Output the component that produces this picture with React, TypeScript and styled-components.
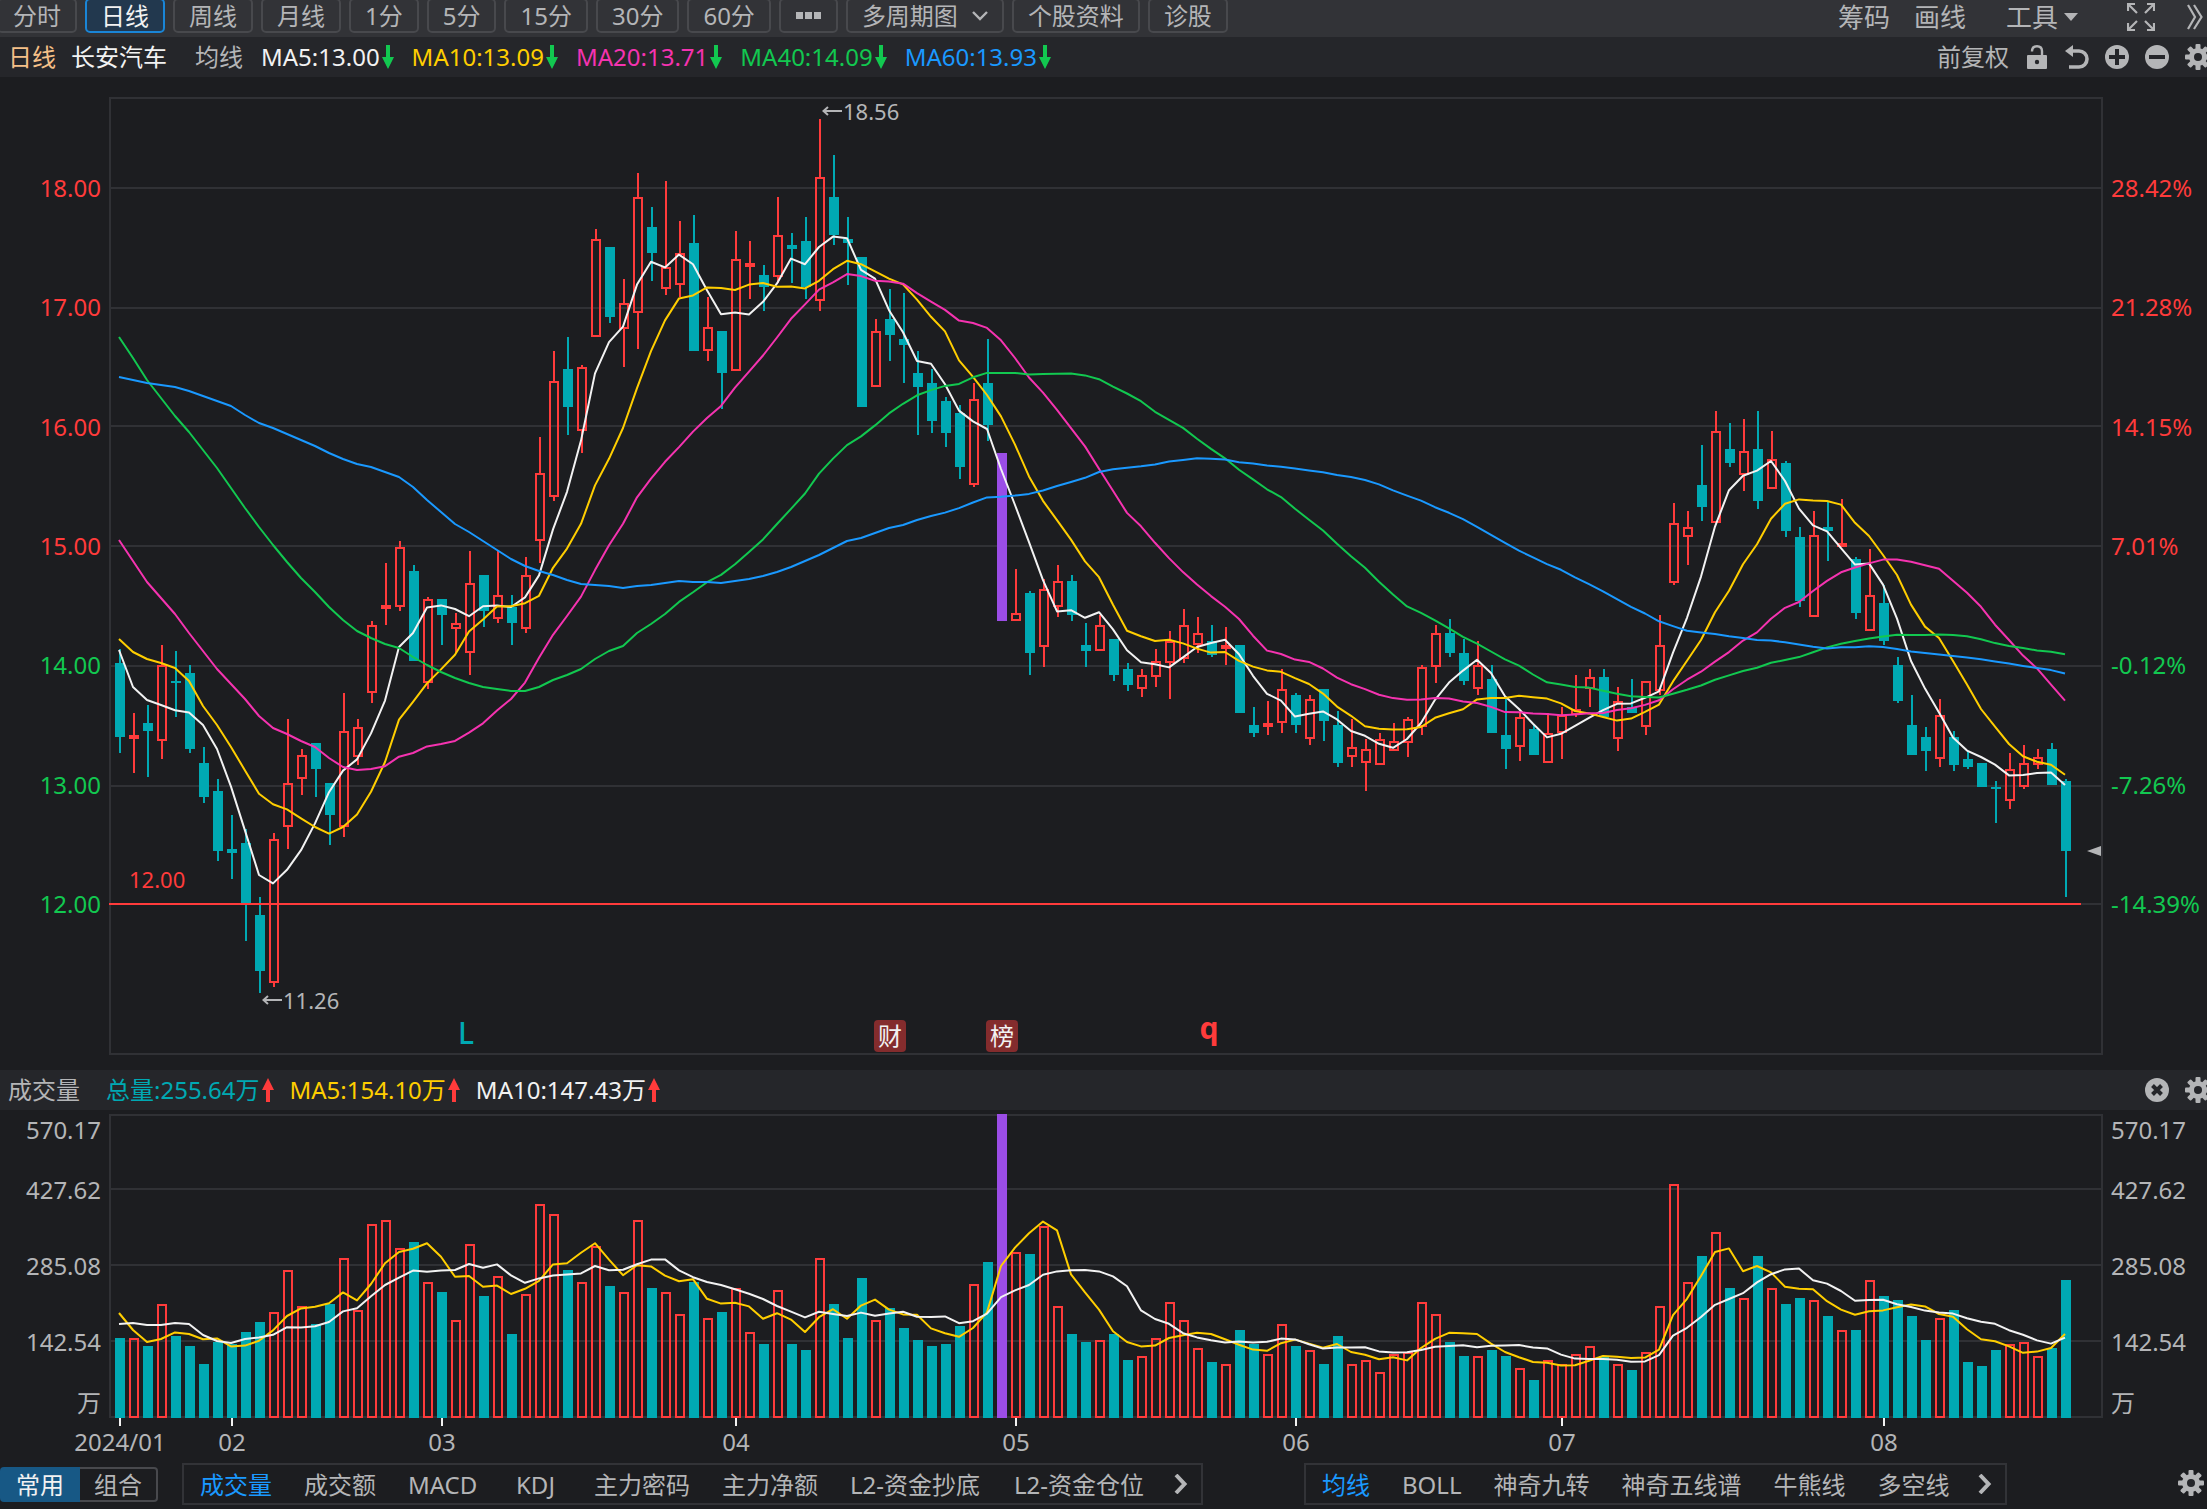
import React from "react";
import styled, { createGlobalStyle } from "styled-components";

const color = {
  page: "#1c1d20",
  bar: "#323337",
  subBar: "#25262a",
  line: "#303135",
  edge: "#48494d",
  text: "#b4b5b7",
  white: "#f2f2f2",
  red: "#ff3b3b",
  teal: "#00a9b3",
  green: "#12c850",
  yellow: "#ffce00",
  pink: "#f533b0",
  blue: "#1a99ff",
  purple: "#9b4de6",
  orange: "#f5c088",
};

/* ------------------------------------------------------------------ data */

type Kind = "u" | "d" | "p";
/** kind, high, body top, body bottom, low, volume top (all in plot units, downwards) */
type Bar = [Kind, number, number, number, number, number];

const bars: Bar[] = [
  ["d", 649, 663, 737, 753, 1338],
  ["u", 713, 735, 739, 773, 1338],
  ["d", 705, 723, 731, 777, 1346],
  ["u", 645, 665, 741, 759, 1304],
  ["d", 651, 681, 683, 717, 1336],
  ["d", 665, 673, 749, 753, 1346],
  ["d", 747, 763, 797, 803, 1364],
  ["d", 779, 791, 851, 861, 1342],
  ["d", 815, 849, 853, 879, 1344],
  ["d", 829, 843, 903, 941, 1332],
  ["d", 897, 915, 971, 993, 1322],
  ["u", 833, 839, 983, 987, 1312],
  ["u", 719, 783, 827, 849, 1270],
  ["u", 749, 755, 779, 795, 1306],
  ["d", 743, 743, 769, 797, 1324],
  ["d", 783, 783, 815, 845, 1304],
  ["u", 693, 731, 827, 837, 1258],
  ["u", 719, 727, 757, 765, 1310],
  ["u", 621, 625, 693, 703, 1224],
  ["u", 563, 605, 609, 625, 1220],
  ["u", 541, 547, 607, 611, 1248],
  ["d", 565, 571, 661, 661, 1242],
  ["u", 597, 599, 683, 689, 1282],
  ["d", 599, 599, 615, 645, 1292],
  ["u", 613, 623, 629, 653, 1320],
  ["u", 551, 583, 653, 675, 1244],
  ["d", 575, 575, 611, 627, 1296],
  ["u", 551, 595, 619, 623, 1276],
  ["d", 595, 607, 623, 645, 1334],
  ["u", 557, 575, 629, 633, 1294],
  ["u", 437, 473, 541, 563, 1204],
  ["u", 351, 381, 497, 501, 1214],
  ["d", 337, 369, 407, 435, 1270],
  ["u", 365, 367, 431, 453, 1282],
  ["u", 229, 239, 337, 337, 1246],
  ["d", 247, 247, 317, 323, 1286],
  ["u", 279, 303, 329, 367, 1292],
  ["u", 173, 197, 313, 349, 1220],
  ["d", 207, 227, 253, 281, 1288],
  ["u", 181, 267, 289, 295, 1292],
  ["u", 221, 253, 285, 297, 1314],
  ["d", 215, 243, 351, 351, 1282],
  ["u", 297, 327, 351, 361, 1318],
  ["d", 331, 331, 373, 409, 1312],
  ["u", 231, 259, 371, 371, 1288],
  ["u", 241, 263, 267, 299, 1332],
  ["d", 265, 275, 287, 311, 1344],
  ["u", 197, 235, 277, 283, 1290],
  ["d", 233, 245, 249, 283, 1344],
  ["d", 217, 241, 287, 299, 1350],
  ["u", 119, 177, 301, 311, 1258],
  ["d", 155, 197, 235, 245, 1304],
  ["d", 217, 239, 243, 285, 1338],
  ["d", 257, 257, 407, 407, 1278],
  ["u", 319, 331, 387, 387, 1320],
  ["d", 289, 319, 335, 361, 1308],
  ["d", 293, 339, 345, 383, 1328],
  ["d", 351, 373, 387, 435, 1340],
  ["d", 369, 383, 421, 433, 1346],
  ["d", 397, 401, 433, 447, 1344],
  ["d", 405, 413, 467, 479, 1326],
  ["u", 383, 399, 485, 487, 1284],
  ["d", 339, 383, 425, 441, 1262],
  ["p", 453, 453, 621, 621, 1114],
  ["u", 569, 613, 621, 621, 1252],
  ["d", 591, 593, 653, 675, 1254],
  ["u", 579, 589, 647, 667, 1226],
  ["u", 565, 581, 607, 617, 1306],
  ["d", 575, 581, 615, 621, 1334],
  ["d", 623, 645, 651, 667, 1342],
  ["u", 615, 625, 651, 651, 1340],
  ["d", 639, 639, 675, 681, 1334],
  ["d", 663, 669, 685, 691, 1360],
  ["u", 669, 675, 689, 697, 1356],
  ["u", 649, 661, 677, 687, 1338],
  ["u", 631, 641, 663, 699, 1302],
  ["u", 609, 625, 659, 663, 1320],
  ["u", 617, 633, 645, 653, 1348],
  ["d", 625, 641, 655, 657, 1362],
  ["u", 627, 645, 649, 665, 1364],
  ["d", 645, 645, 713, 713, 1330],
  ["d", 707, 725, 733, 737, 1344],
  ["u", 701, 723, 727, 735, 1354],
  ["u", 669, 689, 723, 733, 1324],
  ["d", 693, 695, 725, 733, 1346],
  ["u", 695, 699, 739, 745, 1350],
  ["d", 689, 689, 721, 741, 1364],
  ["d", 711, 725, 763, 767, 1336],
  ["u", 719, 747, 757, 767, 1364],
  ["u", 739, 749, 763, 791, 1360],
  ["u", 733, 739, 765, 765, 1372],
  ["u", 723, 741, 751, 751, 1354],
  ["u", 717, 719, 743, 757, 1352],
  ["u", 665, 667, 727, 735, 1302],
  ["u", 625, 633, 667, 683, 1314],
  ["d", 619, 633, 653, 657, 1342],
  ["d", 639, 653, 681, 685, 1356],
  ["u", 641, 665, 689, 695, 1356],
  ["d", 665, 679, 733, 733, 1350],
  ["d", 699, 735, 749, 769, 1356],
  ["u", 713, 717, 747, 761, 1368],
  ["d", 725, 729, 755, 755, 1380],
  ["u", 713, 733, 763, 763, 1360],
  ["u", 707, 715, 733, 759, 1364],
  ["u", 675, 709, 715, 717, 1354],
  ["u", 669, 677, 689, 707, 1346],
  ["d", 669, 677, 717, 717, 1356],
  ["u", 687, 701, 739, 751, 1364],
  ["d", 679, 707, 713, 713, 1370],
  ["u", 681, 681, 727, 735, 1352],
  ["u", 615, 645, 691, 695, 1306],
  ["u", 503, 523, 583, 585, 1184],
  ["u", 511, 527, 537, 565, 1282],
  ["d", 445, 485, 507, 521, 1256],
  ["u", 411, 431, 523, 523, 1232],
  ["d", 423, 449, 463, 467, 1288],
  ["u", 419, 451, 475, 491, 1298],
  ["d", 411, 449, 501, 509, 1256],
  ["u", 431, 459, 489, 489, 1288],
  ["d", 461, 463, 531, 537, 1304],
  ["d", 527, 537, 601, 607, 1298],
  ["u", 511, 535, 617, 617, 1300],
  ["d", 501, 527, 531, 561, 1316],
  ["u", 499, 543, 547, 547, 1330],
  ["d", 557, 559, 613, 619, 1330],
  ["u", 549, 595, 631, 631, 1280],
  ["d", 585, 603, 641, 645, 1296],
  ["d", 657, 665, 701, 703, 1300],
  ["d", 695, 725, 755, 755, 1316],
  ["d", 727, 737, 751, 771, 1340],
  ["u", 699, 715, 759, 767, 1318],
  ["d", 731, 737, 765, 771, 1310],
  ["d", 751, 759, 767, 769, 1362],
  ["d", 763, 763, 787, 787, 1366],
  ["d", 781, 787, 789, 823, 1350],
  ["u", 753, 769, 801, 809, 1344],
  ["u", 745, 763, 787, 789, 1342],
  ["u", 749, 757, 765, 769, 1356],
  ["d", 743, 749, 785, 785, 1348],
  ["d", 779, 781, 851, 897, 1280],
];

/** Leading values of every average, for the days that precede a full window. */
const lead = {
  ma5: [650, 687, 700, 705],
  ma10: [639, 652, 659, 663, 668, 681, 706, 725, 747],
  ma20: [
    540, 561, 582, 598, 614, 633, 651, 669, 684, 699, 716, 728, 734, 741, 747,
    758, 767, 770, 769,
  ],
  ma40: [
    337, 358, 380, 398, 416, 432, 450, 468, 488, 508, 527, 545, 562, 578, 592,
    607, 620, 631, 638, 644, 648, 657, 665, 672, 678, 683, 687, 689, 691, 691,
    687, 680, 675, 669, 659, 651, 646, 633, 624,
  ],
  ma60: [
    377, 380, 383, 385, 387, 391, 396, 401, 406, 415, 423, 428, 434, 440, 446,
    453, 459, 464, 467, 472, 477, 487, 500, 512, 524, 532, 541, 550, 559, 566,
    571, 575, 580, 584, 585, 586, 588, 586, 585, 583, 581, 582, 582, 583, 581,
    579, 576, 572, 567, 561, 555, 548, 541, 538, 533, 528, 525, 520, 516,
  ],
  vol5: [1313, 1330, 1342, 1339],
  vol10: [1324, 1323, 1325, 1325, 1323, 1324, 1335, 1341, 1343],
};

const months: Record<number, string> = {
  0: "2024/01",
  8: "02",
  23: "03",
  44: "04",
  64: "05",
  84: "06",
  103: "07",
  126: "08",
};

const plot = { left: 109, width: 1994, top: 97, height: 958 };
const volume = { top: 1114, height: 304 };
const step = 14;
const centre = (i: number) => 120 + i * step;

const average = (values: number[], n: number, head: number[]) =>
  values.map((_, i) =>
    i < head.length
      ? head[i]
      : values.slice(i - n + 1, i + 1).reduce((a, b) => a + b, 0) / n
  );

const toPoints = (values: number[]) =>
  values.map((v, i) => `${centre(i) - 1},${v.toFixed(1)}`).join(" ");

const closes = bars.map((b) => (b[0] === "u" ? b[2] : b[3]));
const volumes = bars.map((b) => b[5]);

/* ---------------------------------------------------------------- styles */

const GlobalStyle = createGlobalStyle`
  * { box-sizing: border-box; }
  body {
    margin: 0;
    background: ${color.page};
    color: ${color.text};
    font-family: "Noto Sans", "Noto Sans CJK SC", sans-serif;
    font-size: 24px;
    line-height: 24px;
  }
  button {
    margin: 0;
    padding: 0;
    border: 0;
    background: none;
    color: inherit;
    font: inherit;
    white-space: nowrap;
    cursor: pointer;
  }
  svg { display: block; flex: none; }
`;

const Page = styled.main`
  display: flex;
  flex-direction: column;
  min-height: 100vh;
  overflow: hidden;
`;

const Toolbar = styled.header`
  display: flex;
  justify-content: space-between;
  height: 37px;
  background: ${color.bar};
  overflow: hidden;
`;

const Periods = styled.nav`
  display: flex;
  gap: 8px;
  margin: -2px 0 0 -3px;
  height: 35px;
`;

const PeriodButton = styled.button<{ $active?: boolean }>`
  display: flex;
  align-items: center;
  gap: 14px;
  padding: 0 14px;
  border: 2px solid ${(p) => (p.$active ? "#1a85d6" : color.edge)};
  border-radius: 5px;
  background: ${(p) => (p.$active ? "#22384e" : "transparent")};
  color: ${(p) => (p.$active ? color.white : color.text)};
`;

const Tools = styled.div`
  display: flex;
  align-items: center;
  gap: 24px;
  padding: 0 4px 4px 0;
  font-size: 26px;
`;

const ToolMenu = styled.button`
  display: flex;
  align-items: center;
  gap: 6px;
  margin: 0 25px 0 16px;
`;

const ToolIcon = styled.button`
  margin-left: 8px;
`;

const InfoBar = styled.section`
  display: flex;
  align-items: center;
  justify-content: space-between;
  flex: none;
  height: 40px;
  padding-left: 8px;
  background: ${color.subBar};
  overflow: hidden;
`;

const InfoGroup = styled.div<{ $gap: number }>`
  display: flex;
  align-items: center;
  gap: ${(p) => p.$gap}px;
  white-space: nowrap;
`;

const Title = styled.div`
  display: flex;
  gap: 15px;
  margin-right: 10px;
  color: ${color.orange};
`;

const Name = styled.span`
  color: ${color.white};
`;

const VolumeTitle = styled.div`
  margin-right: 10px;
`;

const Reading = styled.span<{ $color?: string }>`
  display: flex;
  align-items: center;
  gap: 2px;
  color: ${(p) => p.$color ?? color.text};
`;

const IconGroup = styled.div`
  display: flex;
  align-items: center;
  gap: 16px;
  margin-right: -4px;
`;

const PriceRow = styled.section`
  display: flex;
  flex: 1 0 auto;
  min-height: 993px;
  padding: 20px 0 15px;
`;

const VolumeRow = styled.section`
  display: flex;
  flex: none;
  height: 308px;
  padding-top: 4px;
`;

const Axis = styled.div<{ $side: "left" | "right" }>`
  display: flex;
  flex-direction: column;
  flex: none;
  width: ${(p) => (p.$side === "left" ? 109 : 104)}px;
  padding-left: ${(p) => (p.$side === "left" ? 0 : 8)}px;
  padding-right: ${(p) => (p.$side === "left" ? 8 : 0)}px;
  text-align: ${(p) => (p.$side === "left" ? "right" : "left")};
  white-space: nowrap;
`;

const PriceAxis = styled(Axis)`
  padding-top: 31px;
  padding-bottom: 91px;
`;

const PriceLabel = styled.div<{ $up: boolean }>`
  display: flex;
  flex: 1;
  flex-direction: column;
  justify-content: center;
  color: ${(p) => (p.$up ? color.red : color.green)};
`;

const VolumeAxis = styled(Axis)`
  display: grid;
  grid-template-rows: 60px 76px 76px minmax(60px, 1fr);
  padding-top: 4px;
`;

const LastStep = styled.div`
  display: flex;
  flex-direction: column;
  justify-content: space-between;
  padding-bottom: 3px;
`;

const Plot = styled.div`
  position: relative;
  flex: 1;
  min-width: 0;
`;

const Canvas = styled.svg`
  width: 100%;
  height: 100%;
`;

const Note = styled.span<{ $color?: string }>`
  position: absolute;
  display: flex;
  align-items: center;
  transform: translateY(-50%);
  color: ${(p) => p.$color ?? color.text};
  font-size: 22px;
`;

const Letter = styled.span<{ $color: string; $weight: number }>`
  position: absolute;
  transform: translate(-50%, -50%);
  color: ${(p) => p.$color};
  font-size: 30px;
  font-weight: ${(p) => p.$weight};
`;

const Badge = styled.button`
  position: absolute;
  width: 32px;
  height: 32px;
  transform: translate(-50%, -50%);
  border-radius: 4px;
  background: #842c2d;
  color: ${color.white};
`;

const Dates = styled.section`
  display: grid;
  grid-template-columns: repeat(${bars.length}, minmax(0, 1fr));
  flex: none;
  height: 45px;
  margin: 0 134px 0 113px;
`;

const DateTick = styled.div`
  display: flex;
  flex-direction: column;
  align-items: center;
  gap: 4px;
  grid-row: 1;
  white-space: nowrap;

  &::before {
    content: "";
    width: 2px;
    height: 8px;
    flex: none;
    background: ${color.white};
  }
`;

const Footer = styled.footer`
  display: flex;
  align-items: center;
  flex: none;
  height: 46px;
  padding: 0 3px 4px 0;
`;

const Segments = styled.div`
  display: flex;
  height: 35px;
  margin-right: 24px;
`;

const Segment = styled.button<{ $active?: boolean }>`
  height: 35px;
  padding: 2px ${(p) => (p.$active ? 16 : 14)}px 0;
  border: ${(p) => (p.$active ? 0 : 2)}px solid ${color.edge};
  border-left: 0;
  border-radius: ${(p) => (p.$active ? "4px 0 0 4px" : "0 4px 4px 0")};
  background: ${(p) => (p.$active ? "#175885" : "transparent")};
  color: ${(p) => (p.$active ? color.white : color.text)};
`;

const Tabs = styled.nav`
  display: flex;
  height: 42px;
  border: 2px solid ${color.bar};
`;

const Tab = styled.button<{ $active?: boolean; $wide?: number }>`
  min-width: ${(p) => p.$wide ?? 0}px;
  padding: 2px 16px 0;
  color: ${(p) => (p.$active ? color.blue : color.text)};
  text-align: left;
`;

const NextButton = styled.button`
  display: flex;
  align-items: center;
  width: 39px;
  padding-left: 12px;
`;

const TabGap = styled.div`
  flex: 0 1 101px;
`;

const FooterEnd = styled.div`
  margin-left: auto;
`;

/* ----------------------------------------------------------------- icons */

const Trend = ({ up }: { up?: boolean }) => (
  <svg width="12" height="24" viewBox="0 0 12 24" fill={up ? color.red : color.green}>
    <path d={up ? "M6 0l6 12H8v12H4V12H0z" : "M4 0h4v12h4L6 24 0 12h4z"} />
  </svg>
);

const Gear = () => (
  <svg width="26" height="26" viewBox="-13 -13 26 26" fill={color.text}>
    {[0, 45, 90, 135].map((a) => (
      <rect key={a} x="-2.5" y="-13" width="5" height="26" rx="1" transform={`rotate(${a})`} />
    ))}
    <circle r="9" />
    <circle r="4" fill={color.subBar} />
  </svg>
);

const discMarks = {
  plus: "M4 12h16M12 4v16",
  minus: "M4 12h16",
  cross: "M7.5 7.5l9 9M16.5 7.5l-9 9",
};

const Disc = ({ mark }: { mark: keyof typeof discMarks }) => (
  <svg width="24" height="24" viewBox="0 0 24 24">
    <circle cx="12" cy="12" r="12" fill={color.text} />
    <path d={discMarks[mark]} stroke={color.subBar} strokeWidth="4" />
  </svg>
);

const Lock = () => (
  <svg width="24" height="24" viewBox="0 0 24 24">
    <path d="M7 6.5C7 3 9 1.2 12 1.2S17 3 17 6v5" fill="none" stroke={color.text} strokeWidth="2.4" />
    <rect x="2" y="10" width="20" height="14" rx="1" fill={color.text} />
    <circle cx="12" cy="17" r="2.2" fill={color.subBar} />
  </svg>
);

const Undo = () => (
  <svg width="24" height="24" viewBox="0 0 24 24">
    <path d="M0 6l8-6v12z" fill={color.text} />
    <path d="M6 6h8a8 8 0 0 1 0 16H4" fill="none" stroke={color.text} strokeWidth="3.6" />
  </svg>
);

const Expand = () => (
  <svg width="28" height="28" viewBox="0 0 28 28" fill="none" stroke={color.text} strokeWidth="2.2">
    <path d="M1 8V1h7M1 1l9 9M20 1h7v7M27 1l-9 9M1 20v7h7M1 27l9-9M20 27h7v-7M27 27l-9-9" />
  </svg>
);

const DoubleChevron = () => (
  <svg width="16" height="26" viewBox="0 0 16 26" fill="none" stroke={color.text} strokeWidth="2.2">
    <path d="M1 1l7 12-7 12M7 1l7.5 12L7 25" />
  </svg>
);

const ChevronDown = () => (
  <svg width="16" height="10" viewBox="0 0 16 10" fill="none" stroke={color.text} strokeWidth="2.4">
    <path d="M1 1l7 7 7-7" />
  </svg>
);

const Next = () => (
  <svg width="14" height="20" viewBox="0 0 14 20" fill="none" stroke={color.text} strokeWidth="4">
    <path d="M2 1l8.5 9L2 19" />
  </svg>
);

const Triangle = () => (
  <svg width="14" height="8" viewBox="0 0 14 8" fill={color.text}>
    <path d="M0 0h14L7 8z" />
  </svg>
);

const Dots = () => (
  <svg width="27" height="7" viewBox="0 0 27 7" fill={color.text}>
    <path d="M1 0h7v7H1zM10 0h7v7h-7zM19 0h7v7h-7z" />
  </svg>
);

const LeftArrow = () => (
  <svg width="21" height="10" viewBox="0 0 21 10" fill="none" stroke={color.text} strokeWidth="2">
    <path d="M20 5H1M6 1L1.5 5 6 9" />
  </svg>
);

/* ---------------------------------------------------------------- charts */

const Column = ({ kind, x, top, bottom }: { kind: Kind; x: number; top: number; bottom: number }) =>
  kind === "u" ? (
    <rect
      x={x - 4}
      y={top + 1}
      width={8}
      height={Math.max(bottom - top - 2, 1)}
      fill="none"
      stroke={color.red}
      strokeWidth={2}
    />
  ) : (
    <rect
      x={x - 5}
      y={top}
      width={10}
      height={bottom - top}
      fill={kind === "p" ? color.purple : color.teal}
    />
  );

const Curve = ({ values, stroke }: { values: number[]; stroke: string }) => (
  <polyline points={toPoints(values)} fill="none" stroke={stroke} strokeWidth={2} strokeLinejoin="round" />
);

const Grid = ({ top, height, rows }: { top: number; height: number; rows: number[] }) => (
  <g fill="none" stroke={color.line} strokeWidth={2} shapeRendering="crispEdges">
    <rect x={plot.left + 1} y={top + 1} width={plot.width - 2} height={height - 2} />
    {rows.map((y) => (
      <line key={y} x1={plot.left} x2={plot.left + plot.width} y1={y} y2={y} />
    ))}
  </g>
);

const place = (x: number, y: number) => ({
  left: `${((x - plot.left) / plot.width) * 100}%`,
  top: `${((y - plot.top) / plot.height) * 100}%`,
});

const PriceChart = () => (
  <Plot>
    <Canvas
      viewBox={`${plot.left} ${plot.top} ${plot.width} ${plot.height}`}
      preserveAspectRatio="none"
      role="img"
      aria-label="日线"
    >
      <Grid top={plot.top} height={plot.height} rows={[188, 308, 426, 546, 666, 786, 904]} />
      <g shapeRendering="crispEdges">
        {bars.map(([kind, high, top, bottom, low], i) => (
          <g key={i}>
            <path
              d={`M${centre(i)} ${high}V${top}M${centre(i)} ${bottom}V${low}`}
              stroke={kind === "u" ? color.red : color.teal}
              strokeWidth={2}
            />
            <Column kind={kind} x={centre(i)} top={top} bottom={bottom} />
          </g>
        ))}
      </g>
      <Curve values={average(closes, 5, lead.ma5)} stroke={color.white} />
      <Curve values={average(closes, 10, lead.ma10)} stroke={color.yellow} />
      <Curve values={average(closes, 20, lead.ma20)} stroke={color.pink} />
      <Curve values={average(closes, 40, lead.ma40)} stroke={color.green} />
      <Curve values={average(closes, 60, lead.ma60)} stroke={color.blue} />
      <path d="M109 904H2081" stroke={color.red} strokeWidth={2} />
      <path d="M2087 851l14-5v10z" fill={color.text} />
    </Canvas>
    <Note style={place(822, 111)}>
      <LeftArrow />
      18.56
    </Note>
    <Note style={place(262, 1000)}>
      <LeftArrow />
      11.26
    </Note>
    <Note $color={color.red} style={place(129, 879)}>
      12.00
    </Note>
    <Letter $color={color.teal} $weight={500} style={place(466, 1033)}>
      L
    </Letter>
    <Badge style={place(890, 1036)}>财</Badge>
    <Badge style={place(1002, 1036)}>榜</Badge>
    <Letter $color={color.red} $weight={700} style={place(1209, 1028)}>
      q
    </Letter>
  </Plot>
);

const VolumeChart = () => (
  <Plot>
    <Canvas
      viewBox={`${plot.left} ${volume.top} ${plot.width} ${volume.height}`}
      preserveAspectRatio="none"
      role="img"
      aria-label="成交量"
    >
      <Grid top={volume.top} height={volume.height} rows={[1189, 1265, 1341]} />
      <g shapeRendering="crispEdges">
        {bars.map((b, i) => (
          <Column key={i} kind={b[0]} x={centre(i)} top={b[5]} bottom={volume.top + volume.height} />
        ))}
      </g>
      <Curve values={average(volumes, 5, lead.vol5)} stroke={color.yellow} />
      <Curve values={average(volumes, 10, lead.vol10)} stroke={color.white} />
    </Canvas>
  </Plot>
);

const VolumeScale = ({ side }: { side: "left" | "right" }) => (
  <VolumeAxis $side={side}>
    <div>570.17</div>
    <div>427.62</div>
    <div>285.08</div>
    <LastStep>
      <div>142.54</div>
      <div>万</div>
    </LastStep>
  </VolumeAxis>
);

/* ------------------------------------------------------------------ page */

const periods = ["分时", "日线", "周线", "月线", "1分", "5分", "15分", "30分", "60分"];
const prices = ["18.00", "17.00", "16.00", "15.00", "14.00", "13.00", "12.00"];
const changes = ["28.42%", "21.28%", "14.15%", "7.01%", "-0.12%", "-7.26%", "-14.39%"];
const averages: [string, string][] = [
  ["MA5:13.00", color.white],
  ["MA10:13.09", color.yellow],
  ["MA20:13.71", color.pink],
  ["MA40:14.09", color.green],
  ["MA60:13.93", color.blue],
];
const totals: [string, string][] = [
  ["总量:255.64万", color.teal],
  ["MA5:154.10万", color.yellow],
  ["MA10:147.43万", color.white],
];
const studies: [string, number?][] = [
  ["成交量"],
  ["成交额"],
  ["MACD", 108],
  ["KDJ", 78],
  ["主力密码"],
  ["主力净额"],
  ["L2-资金抄底", 164],
  ["L2-资金仓位", 164],
];
const overlays = ["均线", "BOLL", "神奇九转", "神奇五线谱", "牛熊线", "多空线"];

export default function App() {
  return (
    <>
      <GlobalStyle />
      <Page>
        <Toolbar>
          <Periods>
            {periods.map((p) => (
              <PeriodButton key={p} $active={p === "日线"}>
                {p}
              </PeriodButton>
            ))}
            <PeriodButton aria-label="更多">
              <Dots />
            </PeriodButton>
            <PeriodButton>
              多周期图
              <ChevronDown />
            </PeriodButton>
            <PeriodButton>个股资料</PeriodButton>
            <PeriodButton>诊股</PeriodButton>
          </Periods>
          <Tools>
            <button>筹码</button>
            <button>画线</button>
            <ToolMenu>
              工具
              <Triangle />
            </ToolMenu>
            <button aria-label="全屏">
              <Expand />
            </button>
            <ToolIcon aria-label="展开">
              <DoubleChevron />
            </ToolIcon>
          </Tools>
        </Toolbar>

        <InfoBar>
          <InfoGroup $gap={18}>
            <Title>
              日线
              <Name>长安汽车</Name>
            </Title>
            <Reading>均线</Reading>
            {averages.map(([text, tone]) => (
              <Reading key={text} $color={tone}>
                {text}
                <Trend />
              </Reading>
            ))}
          </InfoGroup>
          <IconGroup>
            <button>前复权</button>
            <button aria-label="锁定">
              <Lock />
            </button>
            <button aria-label="撤销">
              <Undo />
            </button>
            <button aria-label="放大">
              <Disc mark="plus" />
            </button>
            <button aria-label="缩小">
              <Disc mark="minus" />
            </button>
            <button aria-label="设置">
              <Gear />
            </button>
          </IconGroup>
        </InfoBar>

        <PriceRow>
          <PriceAxis $side="left">
            {prices.map((p, i) => (
              <PriceLabel key={p} $up={i < 4}>
                {p}
              </PriceLabel>
            ))}
          </PriceAxis>
          <PriceChart />
          <PriceAxis $side="right">
            {changes.map((p, i) => (
              <PriceLabel key={p} $up={i < 4}>
                {p}
              </PriceLabel>
            ))}
          </PriceAxis>
        </PriceRow>

        <InfoBar>
          <InfoGroup $gap={16}>
            <VolumeTitle>成交量</VolumeTitle>
            {totals.map(([text, tone]) => (
              <Reading key={text} $color={tone}>
                {text}
                <Trend up />
              </Reading>
            ))}
          </InfoGroup>
          <IconGroup>
            <button aria-label="关闭">
              <Disc mark="cross" />
            </button>
            <button aria-label="设置">
              <Gear />
            </button>
          </IconGroup>
        </InfoBar>

        <VolumeRow>
          <VolumeScale side="left" />
          <VolumeChart />
          <VolumeScale side="right" />
        </VolumeRow>

        <Dates>
          {Object.entries(months).map(([i, label]) => (
            <DateTick key={i} style={{ gridColumn: Number(i) + 1 }}>
              {label}
            </DateTick>
          ))}
        </Dates>

        <Footer>
          <Segments>
            <Segment $active>常用</Segment>
            <Segment>组合</Segment>
          </Segments>
          <Tabs>
            {studies.map(([text, wide], i) => (
              <Tab key={text} $active={i === 0} $wide={wide}>
                {text}
              </Tab>
            ))}
            <NextButton aria-label="更多指标">
              <Next />
            </NextButton>
          </Tabs>
          <TabGap />
          <Tabs>
            {overlays.map((text, i) => (
              <Tab key={text} $active={i === 0}>
                {text}
              </Tab>
            ))}
            <NextButton aria-label="更多均线">
              <Next />
            </NextButton>
          </Tabs>
          <FooterEnd>
            <button aria-label="设置">
              <Gear />
            </button>
          </FooterEnd>
        </Footer>
      </Page>
    </>
  );
}
